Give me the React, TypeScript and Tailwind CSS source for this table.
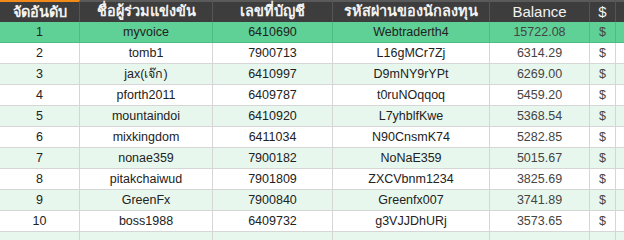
const rows = [
  ["1", "myvoice", "6410690", "Webtraderth4", "15722.08"],
  ["2", "tomb1", "7900713", "L16gMCr7Zj", "6314.29"],
  ["3", "jax(เจ๊ก)", "6410997", "D9mNY9rYPt", "6269.00"],
  ["4", "pforth2011", "6409787", "t0ruNOqqoq", "5459.20"],
  ["5", "mountaindoi", "6410920", "L7yhblfKwe", "5368.54"],
  ["6", "mixkingdom", "6411034", "N90CnsmK74", "5282.85"],
  ["7", "nonae359", "7900182", "NoNaE359", "5015.67"],
  ["8", "pitakchaiwud", "7901809", "ZXCVbnm1234", "3825.69"],
  ["9", "GreenFx", "7900840", "Greenfx007", "3741.89"],
  ["10", "boss1988", "6409732", "g3VJJDhURj", "3573.65"],
  ["", "", "", "", ""],
];

const widths = ["w-[80px]", "w-[133px]", "w-[120px]", "w-[157px]", "w-[100px]", "w-[26px]"];

const headers = [
  { text: "จัดอันดับ", cls: "text-[14.5px] font-bold" },
  { text: "ชื่อผู้ร่วมแข่งขัน", cls: "text-[14.5px] font-bold" },
  { text: "เลขที่บัญชี", cls: "text-[14.5px] font-bold" },
  { text: "รหัสผ่านของนักลงทุน", cls: "text-[14.5px] font-bold" },
  { text: "Balance", cls: "text-[15px]" },
  { text: "$", cls: "text-[15px]" },
];

export default function App() {
  return (
    <div className="h-[240px] w-[624px] overflow-hidden bg-white font-['Liberation_Sans',Tahoma,sans-serif]">
      <div className="flex h-[22px] border-t-2 border-[#5a5a5a] bg-[#3d3d3d] text-[#f2f2f2]">
        {headers.map((h, i) => (
          <div
            key={h.text}
            className={`${widths[i]} ${h.cls} -mt-[2px] flex shrink-0 items-center justify-center border-r border-[#555] leading-none ${i === 0 ? "border-t-2 border-t-[#f28a1a]" : ""}`}
          >
            {h.text}
          </div>
        ))}
        <div className="flex-1" />
      </div>
      {rows.map((r, idx) => {
        const bg = idx === 0 ? "bg-[#5fd096]" : idx % 2 === 1 ? "bg-white" : "bg-[#e8f7ee]";
        const line = idx === 0 ? "border-[#4dbb84]" : "border-[#d6d6d6]";
        return (
          <div key={idx} className={`flex h-[21px] border-b ${line} ${bg} text-[12.5px] text-[#222]`}>
            {[...r, idx === 10 ? "" : "$"].map((c, i) => (
              <div
                key={i}
                className={`${widths[i]} flex shrink-0 items-center justify-center border-r ${line} ${i === 4 || i === 5 ? "text-[#444]" : ""} ${i === 5 ? "pt-[1px]" : ""}`}
              >
                {c}
              </div>
            ))}
            <div className="flex-1" />
          </div>
        );
      })}
    </div>
  );
}
